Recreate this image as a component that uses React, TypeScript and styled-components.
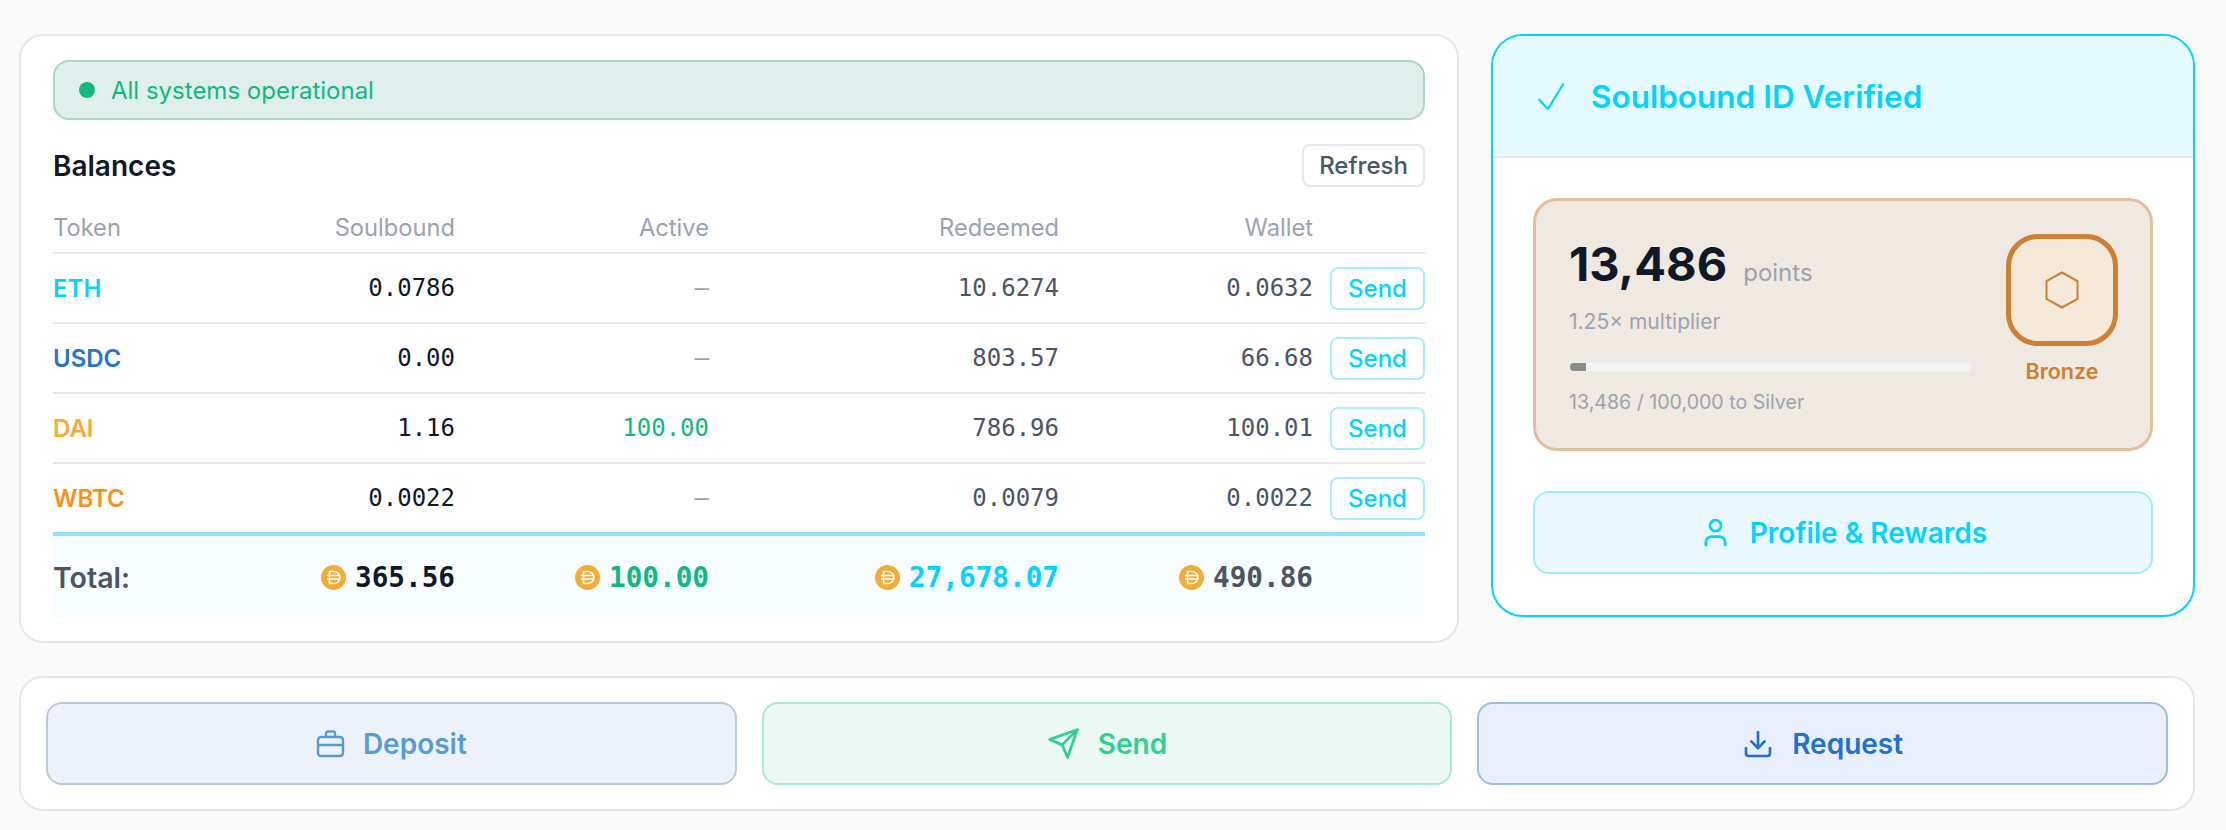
import React from 'react';
import styled, { createGlobalStyle } from 'styled-components';
import { Download, User } from 'lucide-react';

const GlobalStyle = createGlobalStyle`
  html, body {
    margin: 0;
    padding: 0;
    background: #fafafa;
    font-family: Inter, 'Liberation Sans', sans-serif;
  }
  * { box-sizing: border-box; }
`;

const MONO = `'DejaVu Sans Mono', 'Liberation Mono', monospace`;

const Page = styled.div`
  width: 2226px;
  height: 830px;
  padding: 34px 31px 0 19px;
  display: flex;
  flex-direction: column;
  gap: 33px;
`;

const TopRow = styled.div`
  display: flex;
  align-items: flex-start;
  gap: 32px;
`;

const Card = styled.section`
  background: #fff;
  border: 2px solid #e5e7eb;
  border-radius: 24px;
`;

const BalancesCard = styled(Card)`
  width: 1440px;
  height: 609px;
  padding: 24px 32px;
`;

const Banner = styled.div`
  height: 60px;
  display: flex;
  align-items: center;
  gap: 16px;
  padding: 0 24px;
  background: #e0efeb;
  border: 2px solid #a8d8c8;
  border-radius: 16px;
  color: #10b981;
  font-size: 24px;
  font-weight: 400;
`;

const Dot = styled.span`
  width: 16px;
  height: 16px;
  border-radius: 50%;
  background: #10b981;
`;

const TitleRow = styled.div`
  display: flex;
  justify-content: space-between;
  align-items: center;
  margin-top: 24px;
`;

const Title = styled.h2`
  margin: 0;
  font-size: 28px;
  font-weight: 600;
  color: #111827;
`;

const OutlineButton = styled.button`
  height: 43px;
  background: #fff;
  border-radius: 8px;
  font-family: inherit;
  font-size: 24px;
  font-weight: 500;
  padding: 0;
`;

const RefreshButton = styled(OutlineButton)`
  width: 123px;
  border: 2px solid #e5e7eb;
  color: #4b5563;
`;

const SendButton = styled(OutlineButton)`
  width: 95px;
  border: 2px solid #a6eeff;
  color: #00d4ff;
  justify-self: end;
`;

const Row = styled.div`
  display: grid;
  grid-template-columns: 200px 202px 254px 350px 254px 112px;
  align-items: center;
  height: 70px;
  border-bottom: 2px solid #e5e7eb;
`;

const HeadRow = styled(Row)`
  height: 67px;
  padding-bottom: 10px;
  align-items: end;
`;

const HeadCell = styled.div<{ $left?: boolean }>`
  text-align: ${({ $left }) => ($left ? 'left' : 'right')};
  color: #9ca3af;
  font-size: 23.7px;
  font-weight: 400;
  line-height: 28px;
`;

const TokenCell = styled.div<{ $color: string }>`
  color: ${({ $color }) => $color};
  font-size: 24px;
  font-weight: 600;
`;

const Num = styled.div<{ $color: string }>`
  text-align: right;
  color: ${({ $color }) => $color};
  font-family: ${MONO};
  font-size: 24px;
`;

const LastRow = styled(Row)`
  border-bottom: 4px solid #94e3f2;
  height: 72px;
`;

const TotalRow = styled(Row)`
  height: 82px;
  border-bottom: 0;
  background: #f8fdff;
`;

const TotalLabel = styled.div`
  color: #4b5563;
  font-size: 28.5px;
  font-weight: 600;
`;

const TotalCell = styled.div<{ $color: string }>`
  display: flex;
  justify-content: flex-end;
  align-items: center;
  gap: 9px;
  color: ${({ $color }) => $color};
  font-family: ${MONO};
  font-size: 27.7px;
  font-weight: 700;
`;

const VerifiedCard = styled(Card)`
  width: 704px;
  height: 583px;
  border-color: #00d4ff;
  border-radius: 32px;
  overflow: hidden;
`;

const VerifiedHeader = styled.div`
  height: 122px;
  display: flex;
  align-items: center;
  gap: 26px;
  padding: 0 44px;
  background: #e6fbff;
  border-bottom: 2px solid #e5e7eb;
  color: #00d4ff;
  font-size: 31.5px;
  font-weight: 600;
`;

const VerifiedBody = styled.div`
  padding: 40px 40px 0;
  display: flex;
  flex-direction: column;
  gap: 40px;
`;

const TierCard = styled.div`
  height: 253px;
  display: flex;
  justify-content: space-between;
  padding: 34px 32px 0 33px;
  background: #f0e9e2;
  border: 3px solid #e3bfa0;
  border-radius: 24px;
`;

const TierInfo = styled.div`
  width: 403px;
`;

const PointsLine = styled.div`
  display: flex;
  align-items: baseline;
  gap: 16px;
`;

const Points = styled.span`
  font-size: 47px;
  font-weight: 700;
  color: #111827;
`;

const MutedText = styled.span<{ $size: number }>`
  color: #9ca3af;
  font-size: ${({ $size }) => $size}px;
`;

const Multiplier = styled.div`
  margin-top: 17px;
`;

const Track = styled.div`
  margin-top: 28px;
  height: 10px;
  background: #f3f4f6;
  border: 1px solid #eceef1;
  border-radius: 5px;
  overflow: hidden;
`;

const Fill = styled.div`
  height: 100%;
  background: #8a8a8a;
`;

const ProgressText = styled.div`
  margin-top: 18px;
`;

const Badge = styled.div`
  display: flex;
  flex-direction: column;
  align-items: center;
  gap: 12px;
  margin-top: -1px;
`;

const BadgeBox = styled.div`
  width: 112px;
  height: 112px;
  display: flex;
  align-items: center;
  justify-content: center;
  background: #f5e9da;
  border: 5px solid #cd7f32;
  border-radius: 32px;
`;

const BadgeLabel = styled.div`
  color: #cd7f32;
  font-size: 21.5px;
  font-weight: 600;
`;

const ActionButton = styled.button<{ $bg: string; $border: string; $color: string }>`
  height: 83px;
  display: flex;
  align-items: center;
  justify-content: center;
  gap: 18px;
  padding: 0;
  background: ${({ $bg }) => $bg};
  border: 2px solid ${({ $border }) => $border};
  border-radius: 16px;
  color: ${({ $color }) => $color};
  font-family: inherit;
  font-size: 28px;
  font-weight: 600;
`;

const ActionsCard = styled(Card)`
  height: 135px;
  display: grid;
  grid-template-columns: repeat(3, 1fr);
  gap: 25px;
  padding: 24px 25px;
`;

const DaiCoin = () => (
  <svg width="25" height="25" viewBox="0 0 25 25">
    <circle cx="12.5" cy="12.5" r="12.5" fill="#f5ac37" />
    <path
      d="M8.5 6.5h4.5a6 6 0 0 1 0 12H8.5zM6 10.5h13M6 14h13"
      fill="none"
      stroke="#fff"
      strokeWidth="1.6"
    />
  </svg>
);

const VerifiedCheck = () => (
  <svg width="28" height="28" viewBox="0 0 28 28" fill="none" stroke="currentColor" strokeWidth="2.2">
    <path d="M1.5 17 L11 27 L26.5 1.5" />
  </svg>
);

const DepositIcon = () => (
  <svg width="29" height="29" viewBox="0 0 29 29" fill="none" stroke="currentColor" strokeWidth="2.4" strokeLinejoin="round">
    <rect x="2" y="8" width="25" height="19" rx="3" />
    <path d="M2 16H27M10 8V4.5a2 2 0 0 1 2-2h5a2 2 0 0 1 2 2V8" />
  </svg>
);

const PaperPlane = () => (
  <svg width="33" height="33" viewBox="0 0 24 24" fill="none" stroke="currentColor" strokeWidth="2" strokeLinecap="round" strokeLinejoin="round">
    <path d="m22 2-7 20-4-9-9-4Z" />
    <path d="M22 2 11 13" />
  </svg>
);

const rows = [
  { token: 'ETH', color: '#00d4ff', soul: '0.0786', active: '—', redeemed: '10.6274', wallet: '0.0632' },
  { token: 'USDC', color: '#2775ca', soul: '0.00', active: '—', redeemed: '803.57', wallet: '66.68' },
  { token: 'DAI', color: '#f5ac37', soul: '1.16', active: '100.00', redeemed: '786.96', wallet: '100.01' },
  { token: 'WBTC', color: '#f7931a', soul: '0.0022', active: '—', redeemed: '0.0079', wallet: '0.0022' },
];

const totals = [
  { value: '365.56', color: '#111827' },
  { value: '100.00', color: '#10b981' },
  { value: '27,678.07', color: '#00d4ff' },
  { value: '490.86', color: '#4b5563' },
];

const App: React.FC = () => {
  return (
    <Page>
      <GlobalStyle />
      <TopRow>
        <BalancesCard>
          <Banner>
            <Dot />
            All systems operational
          </Banner>
          <TitleRow>
            <Title>Balances</Title>
            <RefreshButton>Refresh</RefreshButton>
          </TitleRow>
          <HeadRow>
            <HeadCell $left>Token</HeadCell>
            <HeadCell>Soulbound</HeadCell>
            <HeadCell>Active</HeadCell>
            <HeadCell>Redeemed</HeadCell>
            <HeadCell>Wallet</HeadCell>
          </HeadRow>
          {rows.map((r, i) => {
            const RowEl = i === rows.length - 1 ? LastRow : Row;
            return (
              <RowEl key={r.token}>
                <TokenCell $color={r.color}>{r.token}</TokenCell>
                <Num $color="#111827">{r.soul}</Num>
                <Num $color={r.active === '—' ? '#9ca3af' : '#10b981'}>{r.active}</Num>
                <Num $color="#4b5563">{r.redeemed}</Num>
                <Num $color="#4b5563">{r.wallet}</Num>
                <SendButton>Send</SendButton>
              </RowEl>
            );
          })}
          <TotalRow>
            <TotalLabel>Total:</TotalLabel>
            {totals.map((t) => (
              <TotalCell key={t.value} $color={t.color}>
                <DaiCoin />
                {t.value}
              </TotalCell>
            ))}
          </TotalRow>
        </BalancesCard>
        <VerifiedCard>
          <VerifiedHeader>
            <VerifiedCheck />
            Soulbound ID Verified
          </VerifiedHeader>
          <VerifiedBody>
            <TierCard>
              <TierInfo>
                <PointsLine>
                  <Points>13,486</Points>
                  <MutedText $size={24}>points</MutedText>
                </PointsLine>
                <Multiplier>
                  <MutedText $size={21}>1.25× multiplier</MutedText>
                </Multiplier>
                <Track>
                  <Fill style={{ width: `${(16 / 403) * 100}%` }} />
                </Track>
                <ProgressText>
                  <MutedText $size={19.6}>13,486 / 100,000 to Silver</MutedText>
                </ProgressText>
              </TierInfo>
              <Badge>
                <BadgeBox>
                  <svg width="34" height="38" viewBox="0 0 34 38">
                    <polygon points="17,1.5 32.5,10 32.5,28 17,36.5 1.5,28 1.5,10" fill="none" stroke="#cd7f32" strokeWidth="2" />
                  </svg>
                </BadgeBox>
                <BadgeLabel>Bronze</BadgeLabel>
              </Badge>
            </TierCard>
            <ActionButton $bg="#ebf9ff" $border="#a0ebff" $color="#00d4ff">
              <User size={33} strokeWidth={2} />
              Profile &amp; Rewards
            </ActionButton>
          </VerifiedBody>
        </VerifiedCard>
      </TopRow>
      <ActionsCard>
        <ActionButton $bg="#eef3fb" $border="#b0cdea" $color="#5b9bd5">
          <DepositIcon />
          Deposit
        </ActionButton>
        <ActionButton $bg="#ecf9f4" $border="#a8ebcf" $color="#2fd18f">
          <PaperPlane />
          Send
        </ActionButton>
        <ActionButton $bg="#e9f0fb" $border="#9cbde8" $color="#2171d0">
          <Download size={32} strokeWidth={2} />
          Request
        </ActionButton>
      </ActionsCard>
    </Page>
  );
};

export default App;
